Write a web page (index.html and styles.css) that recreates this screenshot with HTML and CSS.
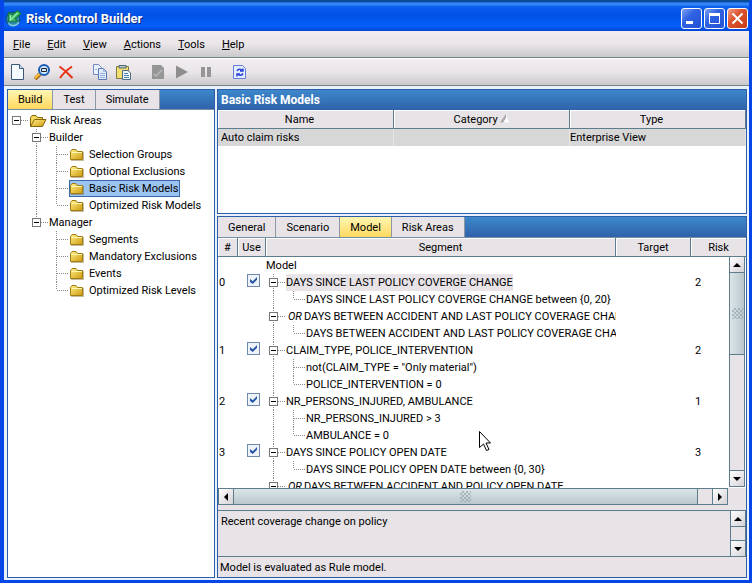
FILE: index.html
```
<!DOCTYPE html>
<html lang="en">
  <head>
    <meta charset="utf-8">
    <title>Risk Control Builder</title>
    <link rel="stylesheet" href="styles.css">
  </head>
  <body>
    <svg class="defs" width="0" height="0" aria-hidden="true">
      <defs>
        <linearGradient id="gold" x1="0" y1="0" x2="1" y2="1">
          <stop offset="0" stop-color="#fff08a"/>
          <stop offset="1" stop-color="#cf9a0c"/>
        </linearGradient>
      </defs>
      <symbol id="folder" viewBox="0 0 14 12">
        <path d="M.5 10.500V2.500L2 .500H6L7.500 2.500H12.500V10.500Z" fill="url(#gold)" stroke="#a07c14"/>
        <path d="M1.500 3.500H12" stroke="#fff6b0"/>
        <path d="M1 11.500H13.500V3" fill="none" stroke="#6e5510" opacity=".4"/>
      </symbol>
      <symbol id="up" viewBox="0 0 8 4"><path d="M0 4L4 0L8 4Z"/></symbol>
      <symbol id="down" viewBox="0 0 8 4"><path d="M0 0H8L4 4Z"/></symbol>
      <symbol id="left" viewBox="0 0 4 8"><path d="M4 0V8L0 4Z"/></symbol>
      <symbol id="right" viewBox="0 0 4 8"><path d="M0 0V8L4 4Z"/></symbol>
    </svg>

    <header class="titlebar">
      <svg width="17" height="17" viewBox="0 0 16 16">
        <circle cx="7.500" cy="8.500" r="6.500" fill="#2a86a8" stroke="#17506e"/>
        <path d="M3 12.500A6 6 0 0 0 13 11.500" fill="none" stroke="#7cc8dc" stroke-width="1.500"/>
        <path d="M3.500 2.500V10.500H11.500L9.500 8L15 3.500L12 .500L7 4.500Z" fill="#3fc06c" stroke="#167a3c"/>
        <path d="M5 5V9.500L12 2.500" fill="none" stroke="#a5efb5"/>
      </svg>
      <h1>Risk Control Builder</h1>
      <button class="win" aria-label="Minimize"><svg width="19" height="19"><path d="M4 12H11V15H4Z" fill="#fff"/></svg></button>
      <button class="win" aria-label="Maximize"><svg width="19" height="19"><path d="M4.500 5V14.500H14.500V5" fill="none" stroke="#fff"/><path d="M4 4H15V7H4Z" fill="#fff"/></svg></button>
      <button class="win close" aria-label="Close"><svg width="19" height="19"><path d="M4.500 4.500L14.500 14.500M14.500 4.500L4.500 14.500" stroke="#fff" stroke-width="2"/></svg></button>
    </header>

    <nav class="menubar">
      <button><u>F</u>ile</button>
      <button><u>E</u>dit</button>
      <button><u>V</u>iew</button>
      <button><u>A</u>ctions</button>
      <button><u>T</u>ools</button>
      <button><u>H</u>elp</button>
    </nav>

    <div class="toolbar">
      <button aria-label="New">
        <svg width="16" height="16"><path d="M1.500 .500H9.500L13.500 4.500V15.500H1.500Z" fill="#f6fbff" stroke="#3c5878"/><path d="M9.500 .500V4.500H13.500" fill="#cfdcea" stroke="#3c5878"/></svg>
      </button>
      <button aria-label="Find">
        <svg width="16" height="16"><path d="M1 15L6 10" stroke="#a86a18" stroke-width="4"/><path d="M1 14L6 9.500" stroke="#ffc840" stroke-width="2"/><circle cx="10" cy="6" r="5" fill="#cdeaff" stroke="#1c5cb4" stroke-width="2"/><path d="M7.500 4.500H12.500V7.500H7.500V5" fill="none" stroke="#223"/></svg>
      </button>
      <button aria-label="Delete">
        <svg width="16" height="16"><path d="M1.500 2.500Q8 7 14.500 14M14 2.500Q6 8 2 14" fill="none" stroke="#e63214" stroke-width="2"/></svg>
      </button>
      <button class="group" aria-label="Copy">
        <svg width="16" height="16"><path d="M1.500 .500H6.500L9.500 3.500V10.500H1.500Z" fill="#eaf2ff" stroke="#7089c0"/><path d="M6.500 4.500H11.500L14.500 7.500V15.500H6.500Z" fill="#e0ebff" stroke="#5c78b4"/><path d="M11.500 4.500V7.500H14.500M8 9.500H13M8 11.500H13M8 13.500H13M3 5.500H5" fill="none" stroke="#9ab0dc"/></svg>
      </button>
      <button aria-label="Paste">
        <svg width="16" height="16"><path d="M.5 2.500H12.500V14.500H.5Z" fill="#f2df70" stroke="#807840"/><path d="M3 1.500H10V4H3Z" fill="#b9c9cf" stroke="#50646c"/><path d="M6.500 6.500H12L14.500 9V15.500H6.500Z" fill="#edf6ff" stroke="#4b6f88"/><path d="M8 9.500H12M8 11.500H13M8 13.500H13" stroke="#4e83a8"/></svg>
      </button>
      <button class="group" aria-label="Validate" disabled>
        <svg width="16" height="16"><path d="M2 1H11L14 4V15H2Z" fill="#969696"/><path d="M4 10L6 12L12 6" fill="none" stroke="#b9b9b9" stroke-width="1.500"/></svg>
      </button>
      <button aria-label="Run" disabled>
        <svg width="16" height="16"><path d="M2 1.500L14 8L2 14.500Z" fill="#8e8e8e"/></svg>
      </button>
      <button aria-label="Pause" disabled>
        <svg width="16" height="16"><path d="M3 3H7V13H3ZM9 3H13V13H9Z" fill="#969696"/></svg>
      </button>
      <button class="group" aria-label="Refresh">
        <svg width="16" height="16"><path d="M1.500 1.500H10.500L13.500 4.500V14.500H1.500Z" fill="#e3edff" stroke="#6480d8"/><path d="M5 7Q6.500 4 10 6M11 4.500V7H8M11 9.500Q9 12.500 6 10.500M5 12.500V10H8" fill="none" stroke="#2844d8" stroke-width="1.500"/></svg>
      </button>
    </div>

    <main class="content">
      <section class="panel explorer">
        <div class="tabs">
          <button class="active">Build</button>
          <button>Test</button>
          <button>Simulate</button>
        </div>
        <ul class="tree">
          <li><span class="node root"><button class="toggle" aria-label="Collapse"></button></span><svg class="open" width="17" height="12" viewBox="0 0 17 12"><path d="M.5 11.500V2.500L2 .500H6L7.500 2.500H12.500V5" fill="#f2d75a" stroke="#86660c"/><path d="M.5 11.500L4.500 4.500H16L12.500 11.500Z" fill="url(#gold)" stroke="#86660c"/></svg><span>Risk Areas</span></li>
          <li><i></i><span class="node"><button class="toggle" aria-label="Collapse"></button></span><span>Builder</span></li>
          <li><i></i><i class="spine"></i><i class="branch"></i><a href="#selection-groups"><svg width="14" height="12"><use href="#folder"/></svg>Selection Groups</a></li>
          <li><i></i><i class="spine"></i><i class="branch"></i><a href="#optional-exclusions"><svg width="14" height="12"><use href="#folder"/></svg>Optional Exclusions</a></li>
          <li><i></i><i class="spine"></i><i class="branch"></i><a class="selected" href="#basic-risk-models"><svg width="14" height="12"><use href="#folder"/></svg>Basic Risk Models</a></li>
          <li><i></i><i class="spine"></i><i class="branch last"></i><a href="#optimized-risk-models"><svg width="14" height="12"><use href="#folder"/></svg>Optimized Risk Models</a></li>
          <li><i></i><span class="node last"><button class="toggle" aria-label="Collapse"></button></span><span>Manager</span></li>
          <li><i></i><i></i><i class="branch"></i><a href="#segments"><svg width="14" height="12"><use href="#folder"/></svg>Segments</a></li>
          <li><i></i><i></i><i class="branch"></i><a href="#mandatory-exclusions"><svg width="14" height="12"><use href="#folder"/></svg>Mandatory Exclusions</a></li>
          <li><i></i><i></i><i class="branch"></i><a href="#events"><svg width="14" height="12"><use href="#folder"/></svg>Events</a></li>
          <li><i></i><i></i><i class="branch last"></i><a href="#optimized-risk-levels"><svg width="14" height="12"><use href="#folder"/></svg>Optimized Risk Levels</a></li>
        </ul>
      </section>

      <div class="work">
        <section class="panel models">
          <h2>Basic Risk Models</h2>
          <table>
            <thead>
              <tr>
                <th>Name</th>
                <th class="sorted">Category <svg width="9" height="9"><path d="M0 8.500L6 0V8.500Z" fill="#a8a8a8"/><path d="M6 0L9 8.500H3L6 4Z" fill="#fff"/></svg></th>
                <th>Type</th>
              </tr>
            </thead>
            <tbody>
              <tr><td>Auto claim risks</td><td></td><td>Enterprise View</td></tr>
            </tbody>
          </table>
        </section>

        <section class="panel detail">
          <div class="tabs wide">
            <button>General</button>
            <button>Scenario</button>
            <button class="active">Model</button>
            <button>Risk Areas</button>
          </div>
          <div class="rules">
            <table>
              <colgroup><col class="c-num"><col class="c-use"><col><col class="c-target"><col class="c-risk"></colgroup>
              <thead>
                <tr><th>#</th><th>Use</th><th>Segment</th><th>Target</th><th>Risk</th></tr>
              </thead>
              <tbody>
                <tr><td></td><td></td><td><div class="seg">Model</div></td><td></td><td></td></tr>
                <tr><td>0</td><td><input type="checkbox" aria-label="Use rule 0" checked></td><td><div class="seg"><span class="node"><button class="toggle" aria-label="Collapse"></button></span><mark>DAYS SINCE LAST POLICY COVERGE CHANGE</mark></div></td><td></td><td>2</td></tr>
                <tr><td></td><td></td><td><div class="seg"><i class="spine"></i><i class="branch last"></i>DAYS SINCE LAST POLICY COVERGE CHANGE between {0, 20}</div></td><td></td><td></td></tr>
                <tr><td></td><td></td><td><div class="seg"><span class="node"><button class="toggle" aria-label="Collapse"></button></span><em>OR</em>DAYS BETWEEN ACCIDENT AND LAST POLICY COVERAGE CHANGE</div></td><td></td><td></td></tr>
                <tr><td></td><td></td><td><div class="seg"><i class="spine"></i><i class="branch last"></i>DAYS BETWEEN ACCIDENT AND LAST POLICY COVERAGE CHANGE</div></td><td></td><td></td></tr>
                <tr><td>1</td><td><input type="checkbox" aria-label="Use rule 1" checked></td><td><div class="seg"><span class="node"><button class="toggle" aria-label="Collapse"></button></span>CLAIM_TYPE, POLICE_INTERVENTION</div></td><td></td><td>2</td></tr>
                <tr><td></td><td></td><td><div class="seg"><i class="spine"></i><i class="branch"></i>not(CLAIM_TYPE = "Only material")</div></td><td></td><td></td></tr>
                <tr><td></td><td></td><td><div class="seg"><i class="spine"></i><i class="branch last"></i>POLICE_INTERVENTION = 0</div></td><td></td><td></td></tr>
                <tr><td>2</td><td><input type="checkbox" aria-label="Use rule 2" checked></td><td><div class="seg"><span class="node"><button class="toggle" aria-label="Collapse"></button></span>NR_PERSONS_INJURED, AMBULANCE</div></td><td></td><td>1</td></tr>
                <tr><td></td><td></td><td><div class="seg"><i class="spine"></i><i class="branch"></i>NR_PERSONS_INJURED &gt; 3</div></td><td></td><td></td></tr>
                <tr><td></td><td></td><td><div class="seg"><i class="spine"></i><i class="branch last"></i>AMBULANCE = 0</div></td><td></td><td></td></tr>
                <tr><td>3</td><td><input type="checkbox" aria-label="Use rule 3" checked></td><td><div class="seg"><span class="node"><button class="toggle" aria-label="Collapse"></button></span>DAYS SINCE POLICY OPEN DATE</div></td><td></td><td>3</td></tr>
                <tr><td></td><td></td><td><div class="seg"><i class="spine"></i><i class="branch last"></i>DAYS SINCE POLICY OPEN DATE between {0, 30}</div></td><td></td><td></td></tr>
                <tr><td></td><td></td><td><div class="seg"><span class="node"><button class="toggle" aria-label="Collapse"></button></span><em>OR</em>DAYS BETWEEN ACCIDENT AND POLICY OPEN DATE</div></td><td></td><td></td></tr>
              </tbody>
            </table>
            <div class="vscroll">
              <button aria-label="Scroll up"><svg width="8" height="4"><use href="#up"/></svg></button>
              <div class="thumb"><span class="grip"></span></div>
              <div class="track"></div>
              <button aria-label="Scroll down"><svg width="8" height="4"><use href="#down"/></svg></button>
            </div>
          </div>
          <div class="hscroll">
            <button aria-label="Scroll left"><svg width="4" height="8"><use href="#left"/></svg></button>
            <div class="thumb"><span class="grip"></span></div>
            <div class="track"></div>
            <button aria-label="Scroll right"><svg width="4" height="8"><use href="#right"/></svg></button>
          </div>
          <div class="note">
            <p>Recent coverage change on policy</p>
            <div class="bar">
              <button aria-label="Scroll up"><svg width="8" height="4"><use href="#up"/></svg></button>
              <div class="track"></div>
              <button aria-label="Scroll down"><svg width="8" height="4"><use href="#down"/></svg></button>
            </div>
          </div>
          <p class="status">Model is evaluated as Rule model.</p>
        </section>
      </div>
    </main>

    <svg class="pointer" width="13" height="21" viewBox="0 0 13 21"><path d="M.5 .500V16.500L4.500 13L7.500 19.500L10 18.500L7 12H11.500Z" fill="#fff" stroke="#000"/></svg>
  </body>
</html>
```

FILE: styles.css
```
:root {
    --face: #e7e3e7;
    --line: #5d7c8c;
    --blue: #2c5ea8;
    --header: linear-gradient(#3d88cb, #2f62aa);
    --dots-v: repeating-linear-gradient(to bottom, #888 0 1px, transparent 1px 2px);
    --dots-h: repeating-linear-gradient(to right, #888 0 1px, transparent 1px 2px);
}
* {
    box-sizing: border-box;
}
body {
    margin: 0;
    height: 100vh;
    display: flex;
    flex-direction: column;
    overflow: hidden;
    font: 11px/17px Roboto, "Liberation Sans", sans-serif;
    color: #000;
    background: #e9f2fa;
    border: solid #0546e8;
    border-width: 0 3px 3px 4px;
}
button {
    font: inherit;
    color: inherit;
    padding: 0;
    border: 0;
    background: none;
}
h1, h2, p, ul {
    margin: 0;
    padding: 0;
}
svg {
    display: block;
    flex: none;
}
.defs {
    position: absolute;
}

/* title bar */
.titlebar {
    display: flex;
    align-items: center;
    gap: 2px;
    height: 31px;
    flex: none;
    margin: 0 -3px 0 -4px;
    padding: 4px 4px 0 5px;
    border-top: 2px solid #0b4a94;
    background: linear-gradient(#1c62d8, #3a90fc 2px, #0a5cec 5px, #0052e6 14px, #0660fa 24px, #0044d4);
}
.titlebar h1 {
    flex: 1;
    margin-left: 2px;
    font: bold 13px/18px Roboto, sans-serif;
    color: #fff;
    text-shadow: 1px 1px #0a2a80;
}
.win {
    width: 21px;
    height: 21px;
    border: 1px solid #fff;
    border-radius: 3px;
    background: linear-gradient(135deg, #7fa2f2, #2f62e2 40%, #2452d4);
}
.win.close {
    background: linear-gradient(135deg, #f0a088, #dc5430 40%, #c63c14);
}

/* menu and tools */
.menubar, .toolbar {
    display: flex;
    align-items: center;
    flex: none;
    background: linear-gradient(#f1edf1, #e9e5e9 50%, #ccc9cc);
    border-bottom: 1px solid #6f8484;
}
.menubar {
    height: 27px;
    gap: 17px;
    padding-left: 9px;
}
.toolbar {
    height: 28px;
    gap: 8px;
    padding-left: 6px;
    border-top: 1px solid #fff;
}
.toolbar .group {
    margin-left: 10px;
}

/* panels */
.content {
    display: flex;
    flex: 1;
    min-height: 0;
    gap: 2px;
    padding: 3px 2px 2px 3px;
}
.panel {
    border: 1px solid var(--blue);
    background: #fff;
}
.explorer {
    width: 208px;
    flex: none;
}
.work {
    display: flex;
    flex: 1;
    min-width: 0;
    flex-direction: column;
    gap: 2px;
}
.models {
    height: 125px;
    flex: none;
}
.detail {
    display: flex;
    flex: 1;
    min-height: 0;
    flex-direction: column;
    background: var(--face);
}
.models h2 {
    height: 20px;
    padding-left: 3px;
    font: bold 12px/20px Roboto, sans-serif;
    color: #fff;
    background: var(--header);
}
.tabs {
    display: flex;
    height: 20px;
    flex: none;
    background: var(--header);
    border-bottom: 1px solid #7890a4;
}
.tabs button {
    padding: 0 10px;
    background: var(--face);
    border-right: 1px solid #8b98a4;
}
.tabs .active {
    background: linear-gradient(#fff6b4, #ffd95e);
}
.tabs.wide {
    height: 21px;
}

/* trees */
.tree {
    list-style: none;
    padding: 2px 0 0 1px;
}
.tree li, .seg {
    display: flex;
    align-items: center;
    height: 17px;
    white-space: nowrap;
}
.tree li i, .seg i, .node {
    width: 20px;
    height: 17px;
    flex: none;
    background-repeat: no-repeat;
}
.spine {
    background-image: var(--dots-v);
    background-position: 7px 0;
    background-size: 1px 100%;
}
.branch, .node {
    background-image: var(--dots-v), var(--dots-h);
    background-position: 7px 0, 8px 8px;
    background-size: 1px 100%, 12px 1px;
}
.branch.last, .node.last {
    background-size: 1px 8px, 12px 1px;
}
.node.root {
    background-size: 0 0, 12px 1px;
}
.toggle {
    display: block;
    width: 9px;
    height: 9px;
    margin: 4px 0 0 3px;
    border: 1px solid #777;
    background: linear-gradient(#000, #000) center / 5px 1px no-repeat #fff;
}
.open {
    margin: 0 3px 0 1px;
}
.tree a {
    display: flex;
    align-items: center;
    gap: 5px;
    height: 17px;
    padding-right: 1px;
    border: 1px solid transparent;
    color: inherit;
    text-decoration: none;
}
.tree .selected {
    background: #9cc4f0;
    border-color: #3868a8;
}

/* tables */
table {
    width: 100%;
    table-layout: fixed;
    border-collapse: separate;
    border-spacing: 0;
}
th {
    height: 19px;
    padding: 0;
    font-weight: normal;
    text-align: center;
    background: var(--face);
    border: solid var(--line);
    border-width: 0 1px 1px 0;
    box-shadow: inset 1px 1px #fff;
}
th svg {
    display: inline-block;
}
td {
    height: 17px;
    padding: 0;
    overflow: hidden;
    white-space: nowrap;
}
/* room for the sort arrow in the columns that have none */
.models th {
    padding-right: 12px;
}
.models th.sorted {
    padding-right: 0;
}
.models td {
    background: #d7d7d7;
    border-right: 1px solid #e6e6e6;
}
.models td:first-child {
    padding-left: 3px;
}
.rules {
    position: relative;
    flex: 1;
    min-height: 0;
    overflow: hidden;
    background: #fff;
}
.rules th:last-child {
    border-right: 0;
}
.rules td:first-child {
    padding-left: 1px;
}
.rules td:last-child {
    padding-left: 4px;
}
.c-num {
    width: 20px;
}
.c-use {
    width: 28px;
}
.c-target {
    width: 75px;
}
.c-risk {
    width: 55px;
}
.seg mark {
    color: inherit;
    background: var(--face);
}
.seg em {
    padding: 0 2px;
}
input[type="checkbox"] {
    appearance: none;
    display: block;
    width: 13px;
    height: 13px;
    margin: 0 0 4px 9px;
    border: 1px solid #6f89ac;
    background: #eef3fa;
}
input[type="checkbox"]:checked::before {
    content: "";
    display: block;
    width: 7px;
    height: 7px;
    margin: 2px;
    background: #2858a8;
    clip-path: polygon(0 30%, 40% 60%, 100% 0, 100% 40%, 40% 100%, 0 70%);
}

/* scroll bars */
.vscroll, .hscroll, .bar {
    display: flex;
    background: var(--face);
    border: 1px solid var(--line);
}
.vscroll, .bar {
    flex-direction: column;
    width: 16px;
}
.vscroll {
    position: absolute;
    top: 18px;
    right: 1px;
    bottom: 1px;
}
.hscroll {
    flex: none;
    height: 17px;
    margin: 0 18px 5px 0;
}
.vscroll button, .hscroll button, .bar button {
    display: grid;
    place-items: center;
    flex: none;
    width: 14px;
    height: 15px;
    background: linear-gradient(135deg, #fff, #d6d2d6);
}
.track {
    flex: 1;
    border: solid var(--line);
    border-width: 1px 0;
}
.thumb {
    display: grid;
    place-items: center;
    background: linear-gradient(to right, #dbe5e8, #b9c7cc);
    border: solid var(--line);
    border-width: 1px 0 0;
}
.vscroll .thumb {
    flex: 0 0 36%;
}
.hscroll .thumb {
    flex: 1;
    background: linear-gradient(#dbe5e8, #b9c7cc);
    border-width: 0 1px;
}
.hscroll .track {
    flex: 0 0 15px;
    border-width: 0 1px 0 0;
}
.grip {
    width: 11px;
    height: 11px;
    background: conic-gradient(#7f9298 25%, transparent 0 50%, #7f9298 0 75%, transparent 0) 0 0 / 4px 4px;
    opacity: .5;
}

/* note and status */
.note {
    display: flex;
    height: 47px;
    flex: none;
    border: solid var(--line);
    border-width: 1px 0;
}
.note p {
    flex: 1;
    padding: 2px 3px;
}
.note .bar {
    border-width: 0 1px;
}
.status {
    height: 20px;
    padding: 2px;
}

.pointer {
    position: absolute;
    left: 479px;
    top: 431px;
}
```
